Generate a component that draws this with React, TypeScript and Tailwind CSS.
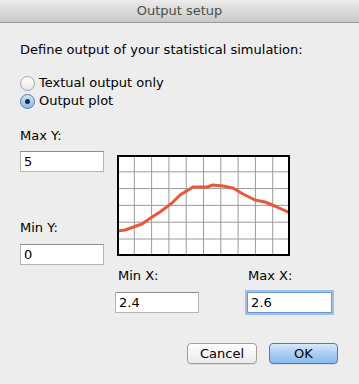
import React from "react";

const pts: [number, number][] = [
  [0, 76], [8, 75], [25, 69], [35, 62], [43, 57], [55, 48], [63, 40], [76, 32], [90, 32], [96, 30],
  [106, 31], [116, 33], [126, 39], [138, 45], [148, 47], [160, 52], [173, 58],
];

function Chart() {
  const vlines = [];
  for (let i = 1; i < 10; i++) vlines.push(i * 17.3);
  const hlines = [];
  for (let i = 1; i < 6; i++) hlines.push(i * 16.8);
  return (
    <svg width="173" height="101" viewBox="0 0 173 101" className="block">
      <rect x="0" y="0" width="173" height="101" fill="#ffffff" />
      {vlines.map((x) => (
        <line key={"v" + x} x1={x} y1={0} x2={x} y2={101} stroke="#9a9a9a" strokeWidth="1" />
      ))}
      {hlines.map((y) => (
        <line key={"h" + y} x1={0} y1={y} x2={173} y2={y} stroke="#9a9a9a" strokeWidth="1" />
      ))}
      <polyline
        points={pts.map((p) => p.join(",")).join(" ")}
        fill="none"
        stroke="#e8583a"
        strokeWidth="3"
        strokeLinejoin="round"
        strokeLinecap="round"
      />
      <rect x="1" y="1" width="171" height="99" fill="none" stroke="#000" strokeWidth="2" />
    </svg>
  );
}

function Field({ value, w, focused }: { value: string; w: string; focused?: boolean }) {
  return (
    <div
      className={
        "h-[21px] bg-white flex items-center pl-[3px] text-[13px] text-black " +
        w +
        (focused
          ? " border border-[#6c98cf] shadow-[0_0_0_2px_#9ec0ea]"
          : " border border-[#b5b5b5] border-t-[#8e8e8e]")
      }
    >
      {value}
    </div>
  );
}

function Radio({ checked, label }: { checked?: boolean; label: string }) {
  return (
    <div className="flex items-center h-[18px]">
      <div
        className={
          "w-[15px] h-[15px] rounded-full flex items-center justify-center border " +
          (checked
            ? "border-[#5a7fae] bg-gradient-to-b from-[#cfe2f8] to-[#8fbbe9]"
            : "border-[#a3a3a3] bg-gradient-to-b from-[#ffffff] to-[#e6e6e6]")
        }
      >
        {checked && <div className="w-[5px] h-[5px] rounded-full bg-[#1a2a40]" />}
      </div>
      <span className="ml-[4px]">{label}</span>
    </div>
  );
}

export default function App() {
  return (
    <div
      className="w-[359px] h-[384px] bg-[#ededed] text-[13px] text-black overflow-hidden"
      style={{ fontFamily: '"DejaVu Sans", sans-serif' }}
    >
      <div className="h-[23px] bg-gradient-to-b from-[#ebebeb] to-[#c9c9c9] border-b border-[#9b9b9b] flex items-center justify-center text-[#4d4d4d] text-[13px] rounded-t-[4px]">
        Output setup
      </div>
      <div className="px-[20px]">
        <div className="mt-[19px] leading-[16px]">Define output of your statistical simulation:</div>
        <div className="mt-[16px] leading-[18px]">
          <Radio label="Textual output only" />
          <Radio checked label="Output plot" />
        </div>
        <div className="mt-[18px] leading-[16px]">Max Y:</div>
        <div className="flex mt-[7px]">
          <div className="w-[84px] flex flex-col">
            <Field value="5" w="w-[84px]" />
            <div className="mt-[48px] leading-[16px]">Min Y:</div>
            <div className="mt-[8px]">
              <Field value="0" w="w-[84px]" />
            </div>
          </div>
          <div className="ml-[13px] mt-[4px]">
            <Chart />
          </div>
        </div>
        <div className="flex ml-[95px] mt-[3px]">
          <div className="w-[84px]">
            <div className="leading-[16px] pl-[3px]">Min X:</div>
            <div className="mt-[8px]">
              <Field value="2.4" w="w-[84px]" />
            </div>
          </div>
          <div className="w-[85px] ml-[48px]">
            <div className="leading-[16px] pl-[1px]">Max X:</div>
            <div className="mt-[8px]">
              <Field value="2.6" w="w-[85px]" focused />
            </div>
          </div>
        </div>
        <div className="flex justify-end mt-[30px] mr-[1px] gap-[12px]">
          <div className="w-[70px] h-[21px] rounded-[4px] border border-[#a0a0a0] bg-gradient-to-b from-[#ffffff] to-[#ebebeb] flex items-center justify-center shadow-[0_1px_0_rgba(0,0,0,0.08)]">
            Cancel
          </div>
          <div className="w-[69px] h-[21px] rounded-[4px] border border-[#5b7aa3] bg-gradient-to-b from-[#d8e9fb] via-[#a9cdf3] to-[#8bbcee] flex items-center justify-center shadow-[0_1px_0_rgba(0,0,0,0.08)]">
            OK
          </div>
        </div>
      </div>
    </div>
  );
}
